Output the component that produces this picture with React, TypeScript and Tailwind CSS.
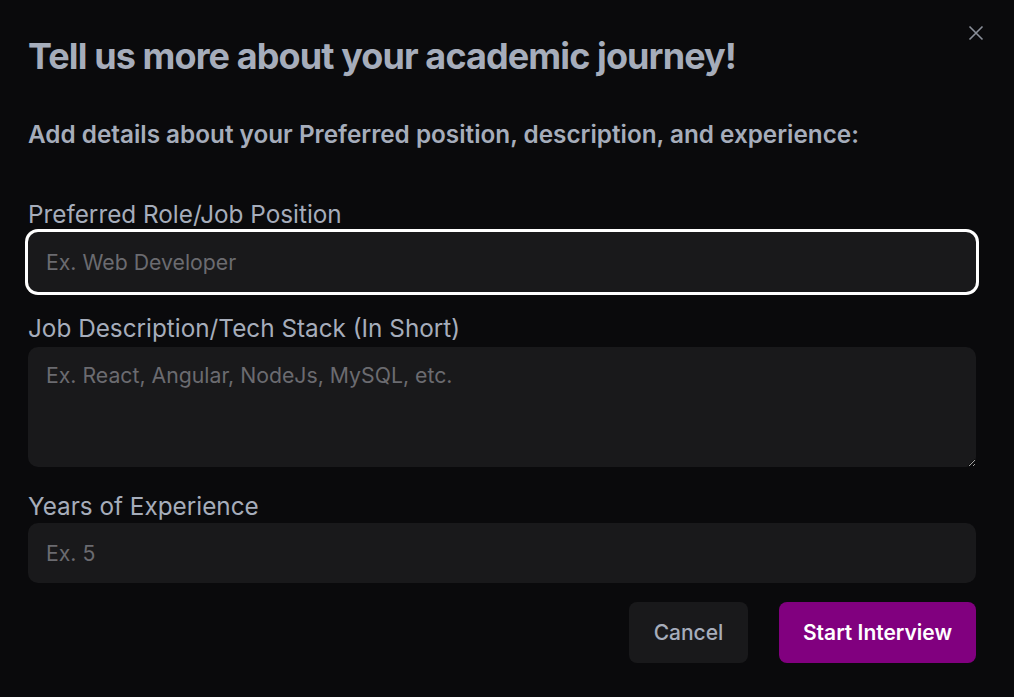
import React from "react";

const App: React.FC = () => {
  const inputBase =
    "w-full bg-[#19191b] rounded-[10px] px-[18px] text-[21.25px] text-[#d4d4d8] placeholder:text-[#6b6b70] outline-none";

  return (
    <div
      className="relative w-[1014px] h-[697px] bg-[#0a0a0c] pl-[28px] pr-[38px] pt-[36px] overflow-hidden"
      style={{ fontFamily: "Inter, 'Noto Sans', sans-serif" }}
    >
      {/* close button */}
      <button className="absolute left-[968px] top-[25px] text-[#8a8f99]">
        <svg width="16" height="16" viewBox="0 0 16 16" fill="none" stroke="currentColor" strokeWidth="1.6">
          <path d="M1.5 1.5 L14.5 14.5 M14.5 1.5 L1.5 14.5" />
        </svg>
      </button>

      <h1 className="text-[36px] leading-[40px] font-bold tracking-tight text-[#a6adbb]">
        Tell us more about your academic journey!
      </h1>

      <h2 className="mt-[42px] text-[24.3px] leading-[32px] font-semibold text-[#a6adbb]">
        Add details about your Preferred position, description, and experience:
      </h2>

      <div className="mt-[48px] flex flex-col">
        <label className="text-[24.3px] leading-[32px] text-[#a6adbb]">
          Preferred Role/Job Position
        </label>
        <input
          autoFocus
          className={`${inputBase} mt-[2px] h-[60px] ring-[3px] ring-white`}
          placeholder="Ex. Web Developer"
        />

        <label className="mt-[20px] text-[24.3px] leading-[32px] text-[#a6adbb] mb-[3px]">
          Job Description/Tech Stack (In Short)
        </label>
        <textarea
          className={`${inputBase} h-[120px] pt-[14px] leading-[28px] resize-y`}
          placeholder="Ex. React, Angular, NodeJs, MySQL, etc."
        />

        <label className="mt-[23px] text-[24.3px] leading-[32px] text-[#a6adbb] mb-[1px]">
          Years of Experience
        </label>
        <input className={`${inputBase} h-[60px]`} placeholder="Ex. 5" />

        <div className="mt-[19px] flex justify-end gap-[31px]">
          <button className="h-[61px] w-[119px] rounded-[8px] bg-[#19191b] text-[21px] font-medium text-[#a6adbb]">
            Cancel
          </button>
          <button className="h-[61px] w-[197px] rounded-[8px] bg-[#81007f] text-[21px] font-semibold text-white">
            Start Interview
          </button>
        </div>
      </div>
    </div>
  );
};

export default App;
